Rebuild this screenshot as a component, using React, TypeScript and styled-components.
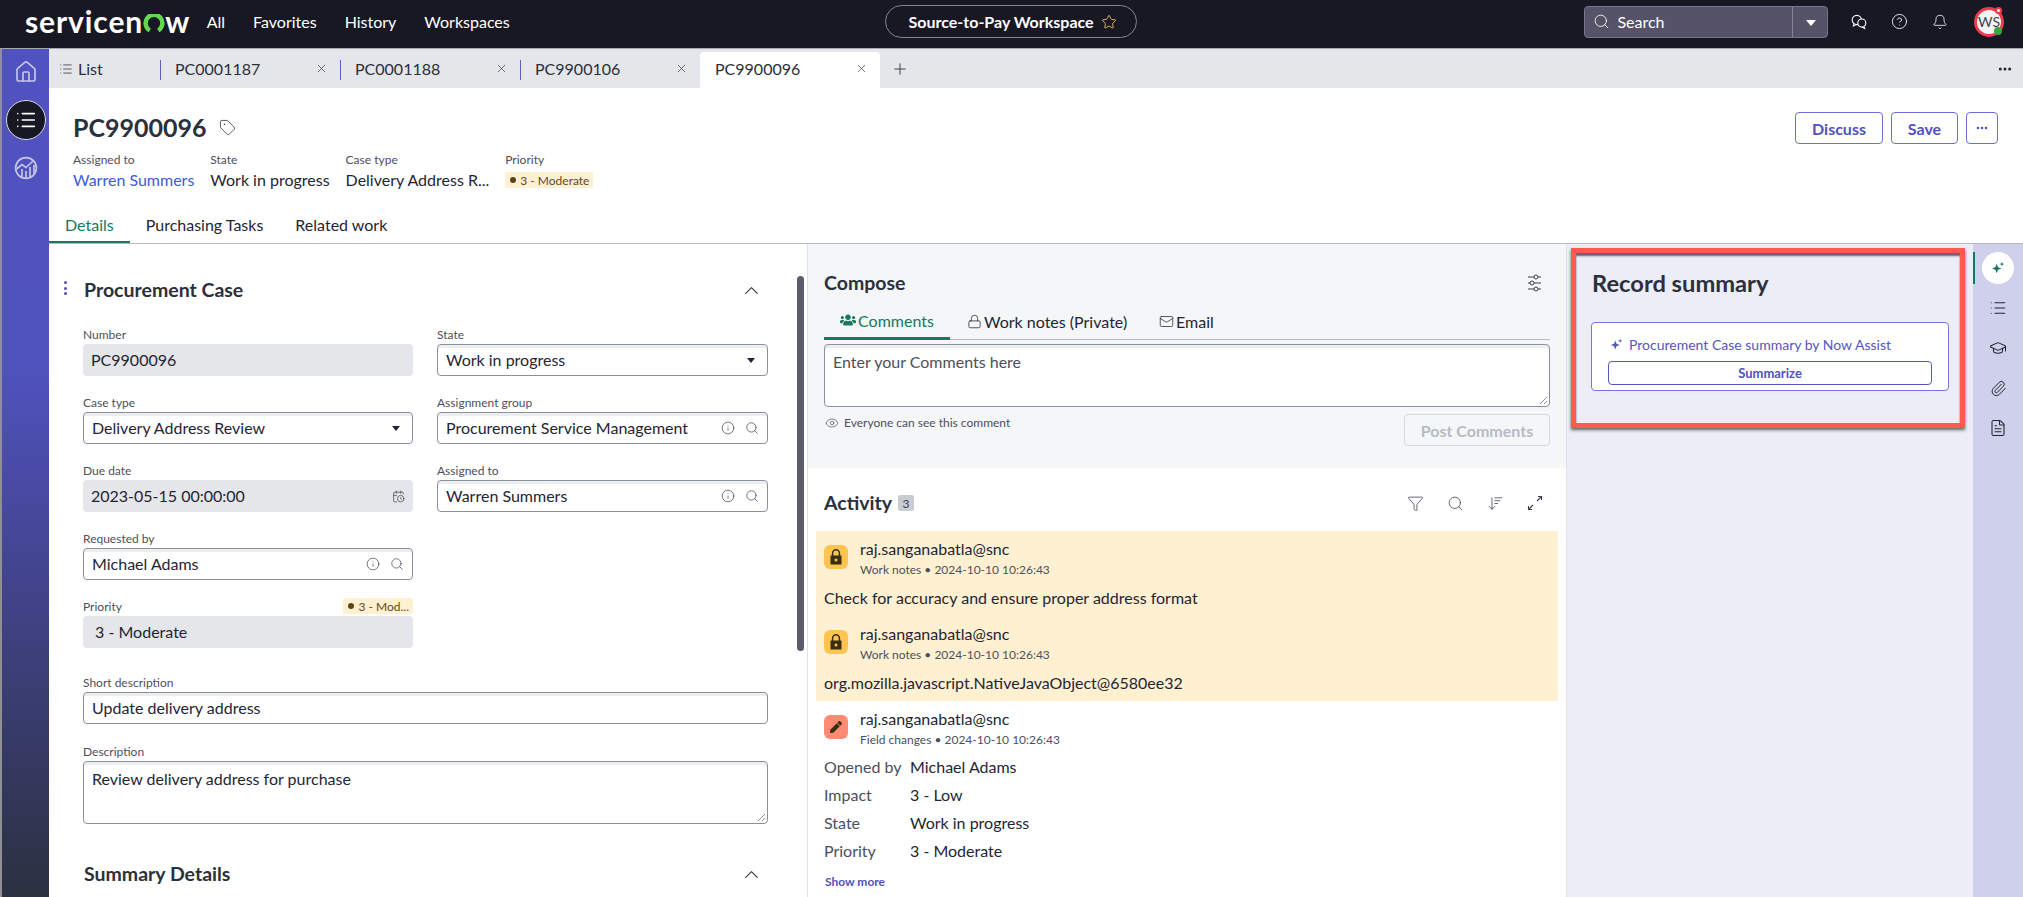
import React from 'react';
import styled, { createGlobalStyle } from 'styled-components';
import {
	Home,
	List,
	Tag,
	X,
	Plus,
	Ellipsis,
	Search,
	CircleHelp,
	Bell,
	Star,
	ChevronUp,
	Info,
	CalendarClock,
	Lock,
	Mail,
	Eye,
	Funnel,
	ArrowDownWideNarrow,
	GraduationCap,
	Paperclip,
	FileText,
} from 'lucide-react';
import { FaUsers, FaPen } from 'react-icons/fa';

const GlobalStyle = createGlobalStyle`
	html, body {
		margin: 0;
		height: 100%;
		overflow: hidden;
		background: #fff;
		font-family: Lato, "Open Sans", sans-serif;
		color: #1f2533;
	}
	* { box-sizing: border-box; }
`;

const Page = styled.div`
	display: flex;
	flex-direction: column;
	width: 2023px;
	height: 897px;
	overflow: hidden;
`;

/* ---- top bar ---- */
const TopBar = styled.header`
	display: flex;
	align-items: center;
	flex: 0 0 49px;
	padding: 0 19px 5px 25px;
	background: #181825;
	border-bottom: 1px solid #a7a9b0;
	color: #fff;
`;

const Logo = styled.div`
	display: flex;
	align-items: baseline;
	width: 182px;
	font-size: 30px;
	font-weight: 700;
	letter-spacing: 0.9px;
	line-height: 34px;
	margin-top: -1px;
`;

const Nav = styled.nav`
	display: flex;
	gap: 28px;
	font-size: 16px;
`;

const WorkspacePill = styled.div`
	display: flex;
	align-items: center;
	justify-content: center;
	gap: 7px;
	width: 253px;
	height: 33px;
	margin-left: 375px;
	padding-left: 3px;
	border: 1px solid #85858f;
	border-radius: 17px;
	font-size: 16px;
	font-weight: 700;
`;

const SearchBox = styled.div`
	display: flex;
	align-items: center;
	width: 244px;
	height: 32px;
	margin-left: 447px;
	background: #565368;
	border: 1px solid #77758a;
	border-radius: 4px;
	font-size: 16px;
`;

const SearchLabel = styled.div`
	display: flex;
	align-items: center;
	gap: 7px;
	flex: 1;
	height: 100%;
	padding-left: 8px;
	border-right: 1px solid #85838f;
`;

const SearchCaret = styled.div`
	width: 0;
	height: 0;
	margin: 2px 11px 0 13px;
	border-left: 5px solid transparent;
	border-right: 5px solid transparent;
	border-top: 6px solid #fff;
`;

const TopIcons = styled.div`
	display: flex;
	align-items: center;
	gap: 24px;
	margin-left: 23px;
`;

const Avatar = styled.div`
	position: relative;
	display: flex;
	align-items: center;
	justify-content: center;
	width: 30px;
	height: 30px;
	margin-left: 2px;
	border: 3px solid #ee3a4d;
	border-radius: 50%;
	background: #f3f4f6;
	color: #40444f;
	font-size: 14px;
`;

const AvatarDot = styled.span<{ $green?: boolean }>`
	position: absolute;
	width: ${(p) => (p.$green ? 8 : 7)}px;
	height: ${(p) => (p.$green ? 8 : 7)}px;
	right: -1px;
	${(p) => (p.$green ? 'bottom: -1px;' : 'top: -3px;')}
	border-radius: 50%;
	background: ${(p) => (p.$green ? '#3aa53a' : '#fff')};
	${(p) => !p.$green && 'border: 2px solid #ee3a4d;'}
`;

/* ---- shell ---- */
const Shell = styled.div`
	display: flex;
	flex: 1;
	min-height: 0;
`;

const SideNav = styled.aside`
	display: flex;
	flex-direction: column;
	align-items: center;
	flex: 0 0 49px;
	padding: 3px 0 0 0;
	gap: 8px;
	background: linear-gradient(180deg, #5152c1 0%, #5052bd 38%, #43448e 62%, #2b3140 100%);
	border-left: 2px solid #8f8f96;
	color: #c9cbe8;
`;

const SideItem = styled.div<{ $active?: boolean }>`
	display: flex;
	align-items: center;
	justify-content: center;
	width: 40px;
	height: 40px;
	border-radius: 50%;
	color: ${(p) => (p.$active ? '#fff' : '#c3c5e6')};
	${(p) => p.$active && 'background: #181825; border: 1px solid #d7d8e6;'}
`;

const Main = styled.main`
	display: flex;
	flex-direction: column;
	flex: 1;
	min-width: 0;
`;

/* ---- record tabs ---- */
const TabBar = styled.div`
	display: flex;
	align-items: stretch;
	flex: 0 0 39px;
	padding-right: 10px;
	background: #e4e6ea;
	font-size: 16px;
`;

const ListTab = styled.div`
	display: flex;
	align-items: center;
	gap: 5px;
	width: 111px;
	padding-left: 10px;
	color: #2a2f3a;
`;

const RecordTab = styled.div<{ $active?: boolean }>`
	position: relative;
	display: flex;
	align-items: center;
	justify-content: space-between;
	width: 180px;
	padding: 0 12px 0 15px;
	color: #2a2f3a;
	${(p) => p.$active && 'margin-top: 3px; padding-bottom: 3px; background: #fff; border-radius: 4px 4px 0 0;'}
	${(p) =>
		!p.$active &&
		`&::before {
			content: '';
			position: absolute;
			left: 0;
			top: 11px;
			height: 20px;
			border-left: 1px solid #5a5fc4;
		}`}
`;

const AddTab = styled.div`
	display: flex;
	align-items: center;
	padding-left: 11px;
	flex: 1;
`;

const TabMenu = styled.div`
	display: flex;
	align-items: center;
`;

/* ---- record header ---- */
const RecordHeader = styled.section`
	display: flex;
	justify-content: space-between;
	flex: 0 0 119px;
	padding: 23px 25px 0 24px;
`;

const TitleRow = styled.div`
	display: flex;
	align-items: center;
	gap: 12px;
	height: 32px;
`;

const RecordTitle = styled.h1`
	margin: 0;
	font-size: 25px;
	line-height: 32px;
	font-weight: 700;
	color: #2a303c;
`;

const MetaRow = styled.div`
	display: flex;
	gap: 16px;
	margin-top: 9px;
`;

const MetaItem = styled.div`
	display: flex;
	flex-direction: column;
	align-items: flex-start;
`;

const MetaLabel = styled.span`
	font-size: 12px;
	line-height: 16px;
	color: #4b505c;
`;

const MetaValue = styled.span<{ $link?: boolean }>`
	margin-top: 1px;
	font-size: 16px;
	line-height: 22px;
	color: ${(p) => (p.$link ? '#3a5bd9' : '#1f2533')};
`;

const Badge = styled.span<{ $small?: boolean }>`
	display: inline-flex;
	align-items: center;
	gap: 4px;
	height: 16px;
	margin-top: ${(p) => (p.$small ? 0 : 4)}px;
	padding: 0 4px 0 5px;
	background: #fff0d1;
	border-radius: 2px;
	font-size: 12px;
	color: #5c4a25;
	&::before {
		content: '';
		width: 6px;
		height: 6px;
		border-radius: 50%;
		background: #5c431a;
	}
`;

const Actions = styled.div`
	display: flex;
	gap: 8px;
	margin-top: 1px;
`;

const OutlineButton = styled.button<{ $w: number }>`
	display: flex;
	align-items: center;
	justify-content: center;
	width: ${(p) => p.$w}px;
	height: 32px;
	padding: 0;
	background: #fff;
	border: 1px solid #6a6fd0;
	border-radius: 4px;
	font: 700 16px Lato, sans-serif;
	color: #4f52bd;
`;

const DetailTabs = styled.div`
	display: flex;
	flex: 0 0 36px;
	border-bottom: 1px solid #b6bcc4;
`;

const DetailTab = styled.div<{ $active?: boolean }>`
	display: flex;
	align-items: center;
	height: 36px;
	padding: 0 16px;
	font-size: 16px;
	color: ${(p) => (p.$active ? '#17795b' : '#1f2533')};
	border-bottom: 2px solid ${(p) => (p.$active ? '#17795b' : 'transparent')};
`;

/* ---- panels ---- */
const Panels = styled.div`
	display: flex;
	flex: 1;
	min-height: 0;
`;

const FormPanel = styled.section`
	position: relative;
	flex: 0 0 758px;
	padding: 32px 0 0 15px;
	overflow: hidden;
`;

const ScrollThumb = styled.div`
	position: absolute;
	left: 748px;
	top: 32px;
	width: 7px;
	height: 375px;
	border-radius: 4px;
	background: #5b5b6c;
`;

const SectionHead = styled.div<{ $inset?: boolean; $top?: number }>`
	display: flex;
	align-items: center;
	width: 699px;
	height: 28px;
	margin-top: ${(p) => p.$top ?? 0}px;
	padding-left: ${(p) => (p.$inset ? 20 : 0)}px;
	color: #2a303c;
`;

const Dots = styled.div`
	display: grid;
	gap: 2.5px;
	margin: -4px 17px 0 0;
	& > i {
		display: block;
		width: 3px;
		height: 3px;
		border-radius: 50%;
		background: #4f52bd;
	}
`;

const SectionTitle = styled.h2`
	flex: 1;
	margin: 0;
	font-size: 19.5px;
	line-height: 28px;
	font-weight: 700;
	color: #2a303c;
`;

const FormGrid = styled.div`
	display: grid;
	grid-template-columns: 330px 331px;
	gap: 18px 24px;
	margin: 22px 0 0 19px;
`;

const FieldWrap = styled.div<{ $full?: boolean; $top?: number }>`
	${(p) => p.$full && 'grid-column: 1 / -1;'}
	margin-top: ${(p) => p.$top ?? 0}px;
`;

const FieldLabel = styled.div`
	display: flex;
	align-items: center;
	justify-content: space-between;
	height: 16px;
	margin-bottom: 2px;
	font-size: 12px;
	color: #4b505c;
`;

const FieldBox = styled.div<{ $readonly?: boolean; $tall?: number }>`
	display: flex;
	align-items: ${(p) => (p.$tall ? 'flex-start' : 'center')};
	position: relative;
	gap: 10px;
	height: ${(p) => p.$tall ?? 32}px;
	padding: ${(p) => (p.$tall ? '7px 8px 0 8px' : '0 8px')};
	border-radius: 4px;
	font-size: 16px;
	line-height: 20px;
	color: #1f2533;
	${(p) =>
		p.$readonly
			? 'background: #e4e6ea;'
			: 'background: #fff; border: 1px solid #8b8f9e; box-shadow: inset 0 3px 0 #edeef0;'}
`;

const FieldText = styled.span`
	flex: 1;
`;

const SelectCaret = styled.span`
	width: 0;
	height: 0;
	margin-right: 4px;
	border-left: 4px solid transparent;
	border-right: 4px solid transparent;
	border-top: 5px solid #1f2533;
`;

const Grip = styled.svg`
	position: absolute;
	right: 1px;
	bottom: 1px;
	width: 9px;
	height: 9px;
	color: #8b8f9e;
`;

const MiddleColumn = styled.section`
	display: flex;
	flex-direction: column;
	flex: 0 0 760px;
	border-left: 1px solid #dfe1e6;
	border-right: 1px solid #dfe1e6;
`;

const ComposePanel = styled.div`
	flex: 0 0 224px;
	padding: 25px 16px 0;
	background: #f5f6f8;
`;

const PanelHead = styled.div`
	display: flex;
	align-items: center;
	height: 28px;
`;

const ComposeTabs = styled.div`
	display: flex;
	height: 35px;
	margin-top: 8px;
	border-bottom: 1px solid #b6bcc4;
`;

const ComposeTab = styled.div<{ $active?: boolean; $w: number; $pad?: number }>`
	display: flex;
	align-items: center;
	justify-content: ${(p) => (p.$active ? 'center' : 'flex-start')};
	gap: 2px;
	width: ${(p) => p.$w}px;
	height: 35px;
	padding: 0 0 ${(p) => (p.$active ? 2 : 3)}px ${(p) => p.$pad ?? 0}px;
	font-size: 16px;
	color: ${(p) => (p.$active ? '#17795b' : '#1f2533')};
	border-bottom: ${(p) => (p.$active ? '3px solid #17795b' : 'none')};
`;

const ComposeBox = styled.div`
	position: relative;
	height: 63px;
	margin-top: 4px;
	padding: 7px 8px 0;
	background: #fff;
	border: 1px solid #8b8f9e;
	border-radius: 4px;
	box-shadow: inset 0 3px 0 #edeef0;
	font-size: 16px;
	line-height: 20px;
	color: #4b505c;
`;

const ComposeFoot = styled.div`
	display: flex;
	justify-content: space-between;
	align-items: flex-start;
	margin-top: 7px;
`;

const Visibility = styled.div`
	display: flex;
	align-items: center;
	gap: 5px;
	margin: 1px 0 0 1px;
	font-size: 12px;
	line-height: 16px;
	color: #4b505c;
`;

const DisabledButton = styled.button`
	width: 146px;
	height: 32px;
	padding: 0;
	background: transparent;
	border: 1px solid #d5d8dd;
	border-radius: 4px;
	font: 700 16px Lato, sans-serif;
	color: #b7bac1;
`;

const ActivityPanel = styled.div`
	flex: 1;
	padding-top: 21px;
	overflow: hidden;
	background: #fff;
`;

const ActivityHead = styled(PanelHead)`
	padding: 0 16px;
	gap: 6px;
`;

const ActivityTitle = styled(SectionTitle)`
	flex: none;
`;

const CountBadge = styled.span`
	display: flex;
	align-items: center;
	justify-content: center;
	width: 16px;
	height: 16px;
	border-radius: 2px;
	background: #c9cdd1;
	font-size: 12px;
	color: #40444f;
`;

const ActivityTools = styled.div`
	display: flex;
	align-items: center;
	gap: 23px;
	margin-left: auto;
	margin-right: 7px;
	color: #3a3f4b;
`;

const NotesBlock = styled.div`
	margin: 14px 8px 0;
	background: #fff0d1;
`;

const Entry = styled.article`
	height: 85px;
	padding: 8px;
`;

const ChangeEntry = styled.article`
	padding-top: 8px;
`;

const EntryHead = styled.div`
	display: grid;
	grid-template-columns: 24px 1fr;
	column-gap: 12px;
`;

const EntryIcon = styled.div<{ $bg: string }>`
	grid-row: 1 / span 2;
	display: flex;
	align-items: center;
	justify-content: center;
	width: 24px;
	height: 24px;
	margin-top: 6px;
	border-radius: 6px;
	background: ${(p) => p.$bg};
	color: #3a2d12;
`;

const EntryName = styled.div`
	font-size: 16px;
	line-height: 20px;
	color: #1f2533;
`;

const EntryMeta = styled.div`
	margin-top: 3px;
	font-size: 12px;
	line-height: 16px;
	color: #4b505c;
`;

const EntryBody = styled.div`
	margin-top: 10px;
	font-size: 16px;
	line-height: 20px;
	color: #1f2533;
`;

const ChangeBlock = styled.div`
	padding: 0 16px;
`;

const ChangeRows = styled.dl`
	display: grid;
	grid-template-columns: 86px 1fr;
	grid-auto-rows: 28px;
	align-items: center;
	margin: 4px 0 0;
	font-size: 16px;
`;

const ChangeKey = styled.dt`
	color: #4b505c;
`;

const ChangeValue = styled.dd`
	margin: 0;
	color: #1f2533;
`;

const ShowMore = styled.div`
	margin: 10px 0 0 1px;
	font-size: 12px;
	line-height: 16px;
	font-weight: 700;
	color: #4f52bd;
`;

/* ---- record summary ---- */
const SummaryPanel = styled.section`
	flex: 1;
	padding: 4px 8px 0 4px;
	background: #ecedf7;
`;

const Highlight = styled.div`
	height: 180px;
	padding: 14px 11px 0 15px;
	border: 5px solid #ff5a4d;
	box-shadow: 0 2px 3px rgba(0, 0, 0, 0.6), inset 0 3px 2px rgba(40, 40, 50, 0.7);
`;

const SummaryTitle = styled.h2`
	margin: 0 0 0 1px;
	font-size: 23.7px;
	line-height: 32px;
	font-weight: 700;
	color: #2a303c;
`;

const SummaryCard = styled.div`
	height: 69px;
	margin-top: 23px;
	padding: 12px 16px 0;
	background: #fff;
	border: 1px solid #7b74e0;
	border-radius: 4px;
`;

const SummaryLine = styled.div`
	display: flex;
	align-items: center;
	gap: 6px;
	padding-left: 2px;
	height: 18px;
	font-size: 14px;
	color: #5557c0;
`;

const SummarizeButton = styled.button`
	display: block;
	width: 324px;
	height: 24px;
	margin-top: 8px;
	padding: 0;
	background: #fff;
	border: 1px solid #5557c0;
	border-radius: 4px;
	font: 700 13px Lato, sans-serif;
	color: #4f52bd;
`;

const Rail = styled.aside`
	position: relative;
	display: flex;
	flex-direction: column;
	align-items: center;
	flex: 0 0 50px;
	padding: 8px 0 0;
	background: #cfd0ec;
	color: #20252f;
`;

const RailItem = styled.div<{ $active?: boolean }>`
	display: flex;
	align-items: center;
	justify-content: center;
	width: 32px;
	height: 32px;
	margin-bottom: 8px;
	border-radius: 50%;
	${(p) => p.$active && 'background: #fff; color: #17795b;'}
	${(p) =>
		p.$active &&
		`&::before {
			content: '';
			position: absolute;
			left: 0;
			top: 8px;
			width: 2px;
			height: 32px;
			background: #17795b;
		}`}
`;

const Sparkle = ({ size = 14 }: { size?: number }) => (
	<svg width={size} height={size} viewBox="0 0 16 16" fill="currentColor">
		<path d="M6.5 3 L8 7 L12 8.5 L8 10 L6.5 14 L5 10 L1 8.5 L5 7 Z" />
		<path d="M12.5 1 L13.2 2.8 L15 3.5 L13.2 4.2 L12.5 6 L11.8 4.2 L10 3.5 L11.8 2.8 Z" />
	</svg>
);

const ChatIcon = () => (
	<svg width="16" height="16" viewBox="0 0 16 16" fill="none" stroke="#fff" strokeWidth="1.1">
		<circle cx="5.8" cy="6" r="4.6" fill="#181825" />
		<path d="M3 9.6 L2.4 12 L5 10.6" fill="#181825" />
		<circle cx="10.8" cy="9" r="4" fill="#181825" />
		<path d="M12.8 12.4 L13.6 14.4 L10.8 13" fill="#181825" />
	</svg>
);

const ChartIcon = () => (
	<svg width="24" height="24" viewBox="0 0 24 24" fill="none" stroke="currentColor" strokeWidth="1.7">
		<circle cx="12" cy="12" r="10.4" />
		<path d="M2.5 13 L8 8.5 L12 11.5 L19 5" />
		<path d="M8 21 V13 M12 22 V15 M16 21 V11 M20 18 V9" />
	</svg>
);

const SliderIcon = () => (
	<svg width="15" height="22" viewBox="0 0 15 22" fill="none" stroke="#3a3f4b" strokeWidth="1">
		<path d="M1 5 H7 M11 5 H14 M1 11 H3 M7 11 H14 M1 17 H7 M11 17 H14" />
		<circle cx="9" cy="5" r="2" />
		<circle cx="5" cy="11" r="2" />
		<circle cx="9" cy="17" r="2" />
	</svg>
);

const ComposeSettings = styled.span`
	display: flex;
	margin-right: 8px;
`;

const ExpandIcon = () => (
	<svg width="16" height="16" viewBox="0 0 16 16" fill="none" stroke="#3a3f4b" strokeWidth="1.1">
		<path d="M10 6 L14.5 1.5 M11 1.5 H14.5 V5" />
		<path d="M6 10 L1.5 14.5 M5 14.5 H1.5 V11" />
	</svg>
);

const SolidLock = () => (
	<svg width="16" height="18" viewBox="0 0 16 18" fill="none">
		<path d="M4.6 8 V5.2 A3.4 3.4 0 0 1 11.4 5.2 V8" stroke="#3a2d12" strokeWidth="1.5" />
		<path
			fillRule="evenodd"
			fill="#3a2d12"
			d="M2.5 7.5 H13.5 V16.5 H2.5 Z M8 10.4 A1.5 1.5 0 1 0 8 13.4 A1.5 1.5 0 1 0 8 10.4 Z"
		/>
	</svg>
);

const ResizeGrip = () => (
	<Grip viewBox="0 0 9 9" fill="none" stroke="currentColor" strokeWidth="1">
		<path d="M1 8 L8 1 M5 8 L8 5" />
	</Grip>
);

const LookupIcons = () => (
	<>
		<Info size={14} strokeWidth={1.2} color="#3a3f4b" />
		<Search size={14} strokeWidth={1.2} color="#3a3f4b" />
	</>
);

interface IFieldProps {
	label: string;
	value: string;
	readonly?: boolean;
	select?: boolean;
	lookup?: boolean;
	full?: boolean;
	top?: number;
}

function Field(props: IFieldProps) {
	const { label, value, readonly, select, lookup, full, top } = props;
	return (
		<FieldWrap $full={full} $top={top}>
			<FieldLabel>{label}</FieldLabel>
			<FieldBox $readonly={readonly}>
				<FieldText>{value}</FieldText>
				{select && <SelectCaret />}
				{lookup && <LookupIcons />}
			</FieldBox>
		</FieldWrap>
	);
}

function NoteEntry({ text }: { text: string }) {
	return (
		<Entry>
			<EntryHead>
				<EntryIcon $bg="#fdc54f">
					<SolidLock />
				</EntryIcon>
				<EntryName>raj.sanganabatla@snc</EntryName>
				<EntryMeta>Work notes • 2024-10-10 10:26:43</EntryMeta>
			</EntryHead>
			<EntryBody>{text}</EntryBody>
		</Entry>
	);
}

const tabs = ['PC0001187', 'PC0001188', 'PC9900106'];

const changes = [
	['Opened by', 'Michael Adams'],
	['Impact', '3 - Low'],
	['State', 'Work in progress'],
	['Priority', '3 - Moderate'],
];

export default function App() {
	return (
		<Page>
			<GlobalStyle />
			<TopBar>
				<Logo>
					servicen
					<svg width="22" height="19" viewBox="0 0 21 18" fill="none" stroke="#62d84e" strokeWidth="4.2">
						<path d="M6.5 15.6 A8 8 0 1 1 14.5 15.6" />
					</svg>
					w
				</Logo>
				<Nav>
					<span>All</span>
					<span>Favorites</span>
					<span>History</span>
					<span>Workspaces</span>
				</Nav>
				<WorkspacePill>
					Source-to-Pay Workspace
					<Star size={16} strokeWidth={1.4} color="#e6b65c" />
				</WorkspacePill>
				<SearchBox>
					<SearchLabel>
						<Search size={17} strokeWidth={1.2} />
						Search
					</SearchLabel>
					<SearchCaret />
				</SearchBox>
				<TopIcons>
					<ChatIcon />
					<CircleHelp size={17} strokeWidth={1.2} />
					<Bell size={16} strokeWidth={1.2} />
					<Avatar>
						WS
						<AvatarDot />
						<AvatarDot $green />
					</Avatar>
				</TopIcons>
			</TopBar>
			<Shell>
				<SideNav>
					<SideItem>
						<Home size={24} strokeWidth={1.7} />
					</SideItem>
					<SideItem $active>
						<List size={22} strokeWidth={1.8} />
					</SideItem>
					<SideItem>
						<ChartIcon />
					</SideItem>
				</SideNav>
				<Main>
					<TabBar>
						<ListTab>
							<List size={14} strokeWidth={1.3} />
							List
						</ListTab>
						{tabs.map((t) => (
							<RecordTab key={t}>
								{t}
								<X size={13} strokeWidth={1.2} />
							</RecordTab>
						))}
						<RecordTab $active>
							PC9900096
							<X size={13} strokeWidth={1.2} />
						</RecordTab>
						<AddTab>
							<Plus size={18} strokeWidth={1.1} />
						</AddTab>
						<TabMenu>
							<Ellipsis size={16} strokeWidth={2.6} />
						</TabMenu>
					</TabBar>
					<RecordHeader>
						<div>
							<TitleRow>
								<RecordTitle>PC9900096</RecordTitle>
								<Tag size={17} strokeWidth={1.2} color="#3a3f4b" />
							</TitleRow>
							<MetaRow>
								<MetaItem>
									<MetaLabel>Assigned to</MetaLabel>
									<MetaValue $link>Warren Summers</MetaValue>
								</MetaItem>
								<MetaItem>
									<MetaLabel>State</MetaLabel>
									<MetaValue>Work in progress</MetaValue>
								</MetaItem>
								<MetaItem>
									<MetaLabel>Case type</MetaLabel>
									<MetaValue>Delivery Address R...</MetaValue>
								</MetaItem>
								<MetaItem>
									<MetaLabel>Priority</MetaLabel>
									<Badge>3 - Moderate</Badge>
								</MetaItem>
							</MetaRow>
						</div>
						<Actions>
							<OutlineButton $w={88}>Discuss</OutlineButton>
							<OutlineButton $w={67}>Save</OutlineButton>
							<OutlineButton $w={32}>
								<Ellipsis size={14} strokeWidth={2.6} />
							</OutlineButton>
						</Actions>
					</RecordHeader>
					<DetailTabs>
						<DetailTab $active>Details</DetailTab>
						<DetailTab>Purchasing Tasks</DetailTab>
						<DetailTab>Related work</DetailTab>
					</DetailTabs>
					<Panels>
						<FormPanel>
							<ScrollThumb />
							<SectionHead>
								<Dots>
									<i />
									<i />
									<i />
								</Dots>
								<SectionTitle>Procurement Case</SectionTitle>
								<ChevronUp size={23} strokeWidth={1.1} />
							</SectionHead>
							<FormGrid>
								<Field label="Number" value="PC9900096" readonly />
								<Field label="State" value="Work in progress" select />
								<Field label="Case type" value="Delivery Address Review" select />
								<Field label="Assignment group" value="Procurement Service Management" lookup />
								<FieldWrap>
									<FieldLabel>Due date</FieldLabel>
									<FieldBox $readonly>
										<FieldText>2023-05-15 00:00:00</FieldText>
										<CalendarClock size={13} strokeWidth={1.3} color="#3a3f4b" />
									</FieldBox>
								</FieldWrap>
								<Field label="Assigned to" value="Warren Summers" lookup />
								<Field label="Requested by" value="Michael Adams" lookup />
								<span />
								<FieldWrap>
									<FieldLabel>
										Priority
										<Badge $small>3 - Mod...</Badge>
									</FieldLabel>
									<FieldBox $readonly>
										<FieldText>&nbsp;3 - Moderate</FieldText>
									</FieldBox>
								</FieldWrap>
								<span />
								<Field label="Short description" value="Update delivery address" full top={8} />
								<FieldWrap $full $top={1}>
									<FieldLabel>Description</FieldLabel>
									<FieldBox $tall={63}>
										Review delivery address for purchase
										<ResizeGrip />
									</FieldBox>
								</FieldWrap>
							</FormGrid>
							<SectionHead $inset $top={36}>
								<SectionTitle>Summary Details</SectionTitle>
								<ChevronUp size={23} strokeWidth={1.1} />
							</SectionHead>
						</FormPanel>
						<MiddleColumn>
							<ComposePanel>
								<PanelHead>
									<SectionTitle>Compose</SectionTitle>
									<ComposeSettings>
										<SliderIcon />
									</ComposeSettings>
								</PanelHead>
								<ComposeTabs>
									<ComposeTab $active $w={126}>
										<FaUsers size={16} />
										Comments
									</ComposeTab>
									<ComposeTab $w={184} $pad={17}>
										<Lock size={15} strokeWidth={1.2} />
										Work notes (Private)
									</ComposeTab>
									<ComposeTab $w={120} $pad={25}>
										<Mail size={15} strokeWidth={1.2} />
										Email
									</ComposeTab>
								</ComposeTabs>
								<ComposeBox>
									Enter your Comments here
									<ResizeGrip />
								</ComposeBox>
								<ComposeFoot>
									<Visibility>
										<Eye size={14} strokeWidth={1.2} />
										Everyone can see this comment
									</Visibility>
									<DisabledButton disabled>Post Comments</DisabledButton>
								</ComposeFoot>
							</ComposePanel>
							<ActivityPanel>
								<ActivityHead>
									<ActivityTitle>Activity</ActivityTitle>
									<CountBadge>3</CountBadge>
									<ActivityTools>
										<Funnel size={17} strokeWidth={1.1} />
										<Search size={17} strokeWidth={1.1} />
										<ArrowDownWideNarrow size={17} strokeWidth={1.1} />
										<ExpandIcon />
									</ActivityTools>
								</ActivityHead>
								<NotesBlock>
									<NoteEntry text="Check for accuracy and ensure proper address format" />
									<NoteEntry text="org.mozilla.javascript.NativeJavaObject@6580ee32" />
								</NotesBlock>
								<ChangeBlock>
									<ChangeEntry>
										<EntryHead>
											<EntryIcon $bg="#ff8a73">
												<FaPen size={12} />
											</EntryIcon>
											<EntryName>raj.sanganabatla@snc</EntryName>
											<EntryMeta>Field changes • 2024-10-10 10:26:43</EntryMeta>
										</EntryHead>
									</ChangeEntry>
									<ChangeRows>
										{changes.map(([k, v]) => (
											<React.Fragment key={k}>
												<ChangeKey>{k}</ChangeKey>
												<ChangeValue>{v}</ChangeValue>
											</React.Fragment>
										))}
									</ChangeRows>
									<ShowMore>Show more</ShowMore>
								</ChangeBlock>
							</ActivityPanel>
						</MiddleColumn>
						<SummaryPanel>
							<Highlight>
								<SummaryTitle>Record summary</SummaryTitle>
								<SummaryCard>
									<SummaryLine>
										<Sparkle size={13} />
										Procurement Case summary by Now Assist
									</SummaryLine>
									<SummarizeButton>Summarize</SummarizeButton>
								</SummaryCard>
							</Highlight>
						</SummaryPanel>
						<Rail>
							<RailItem $active>
								<Sparkle size={14} />
							</RailItem>
							<RailItem>
								<List size={18} strokeWidth={1.4} />
							</RailItem>
							<RailItem>
								<GraduationCap size={18} strokeWidth={1.4} />
							</RailItem>
							<RailItem>
								<Paperclip size={17} strokeWidth={1.4} />
							</RailItem>
							<RailItem>
								<FileText size={18} strokeWidth={1.4} />
							</RailItem>
						</Rail>
					</Panels>
				</Main>
			</Shell>
		</Page>
	);
}
